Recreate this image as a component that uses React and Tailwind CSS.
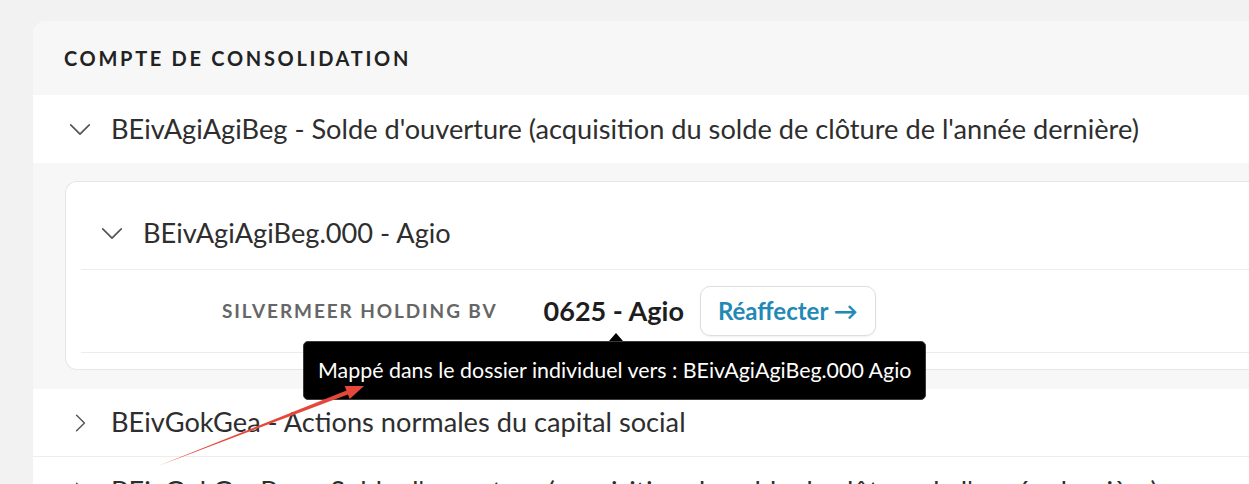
import React from "react";

function ChevronDown({ className }) {
  return (
    <svg viewBox="0 0 24 14" className={className} fill="none" stroke="currentColor" strokeWidth="1.8" strokeLinecap="round" strokeLinejoin="round">
      <path d="M2 2l10 10L22 2" />
    </svg>
  );
}

function ChevronRight({ className }) {
  return (
    <svg viewBox="0 0 14 24" className={className} fill="none" stroke="currentColor" strokeWidth="1.8" strokeLinecap="round" strokeLinejoin="round">
      <path d="M2 2l10 10L2 22" />
    </svg>
  );
}

export default function App() {
  return (
    <div
      className="relative h-[484px] w-[1249px] overflow-hidden bg-[#f2f2f2] pt-[21px] pl-[33px] text-[#2e2e2e]"
      style={{ fontFamily: "Lato, 'Open Sans', sans-serif" }}
    >
      <div className="w-[1260px] rounded-tl-[14px] bg-white">
        {/* header */}
        <div className="flex h-[74px] items-center rounded-tl-[14px] bg-[#f7f7f7] pl-[31px]">
          <h2 className="text-[20px] font-bold tracking-[0.135em] text-[#222]">COMPTE DE CONSOLIDATION</h2>
        </div>

        {/* row 1 expanded */}
        <div className="flex h-[68px] items-center bg-white">
          <ChevronDown className="ml-[35px] mr-[19px] h-[13px] w-[24px] text-[#555]" />
          <span className="whitespace-nowrap text-[27.2px]">BEivAgiAgiBeg - Solde d'ouverture (acquisition du solde de clôture de l'année dernière)</span>
        </div>

        <div className="bg-[#f7f7f7] pt-[18px] pb-[19px] pl-[32px]">
          <div className="rounded-l-[12px] border border-r-0 border-[#e6e6e6] bg-white pt-[15px] pb-[16px]">
            <div className="flex h-[72px] items-center">
              <ChevronDown className="ml-[34px] mr-[19px] h-[13px] w-[24px] text-[#555]" />
              <span className="text-[27.2px]">BEivAgiAgiBeg.000 - Agio</span>
            </div>
            <div className="ml-[15px] border-t border-[#ececec]" />
            <div className="flex h-[82px] items-center pl-[156px]">
              <span className="text-[19px] font-bold tracking-[0.1em] text-[#666]">SILVERMEER HOLDING BV</span>
              <span className="ml-[46px] text-[27px] font-bold text-[#1e1e1e]">0625 - Agio</span>
              <button className="ml-[16px] flex h-[50px] items-center rounded-[10px] border border-[#dedede] bg-white px-[17px] text-[24px] font-bold text-[#2289b5] shadow-[0_1px_2px_rgba(0,0,0,0.06)]">
                Réaffecter →
              </button>
            </div>
            <div className="ml-[15px] border-t border-[#ececec]" />
          </div>
        </div>

        {/* row 2 collapsed */}
        <div className="flex h-[68px] items-center border-b border-[#ededed] bg-white">
          <ChevronRight className="ml-[42px] mr-[25px] h-[22px] w-[11px] text-[#555]" />
          <span className="text-[27.2px]">BEivGokGea - Actions normales du capital social</span>
        </div>

        {/* row 3 collapsed, cut off by the window */}
        <div className="flex h-[68px] items-center bg-white">
          <ChevronRight className="ml-[42px] mr-[25px] h-[22px] w-[11px] text-[#555]" />
          <span className="whitespace-nowrap text-[27.2px]">BEivGokGeaBeg - Solde d'ouverture (acquisition du solde de clôture de l'année dernière)</span>
        </div>
      </div>

      {/* tooltip */}
      <div className="absolute left-[303px] top-[341px] flex h-[59px] w-[623px] items-center whitespace-nowrap rounded-[5px] border border-[#3a3a3a] bg-black pl-[14px] text-[21.4px] text-white">
        <span className="absolute left-[305px] top-[-9px] h-0 w-0 border-x-[7px] border-b-[8px] border-x-transparent border-b-black" />
        Mappé dans le dossier individuel vers : BEivAgiAgiBeg.000 Agio
      </div>

      {/* red annotation arrow */}
      <svg className="absolute left-0 top-0" width="1249" height="484" viewBox="0 0 1249 484">
        <polygon
          points="158,466 347.9,394.4 349.7,399.0 364,386 344.7,386.0 346.5,390.6"
          fill="#e5483a"
        />
      </svg>
    </div>
  );
}
